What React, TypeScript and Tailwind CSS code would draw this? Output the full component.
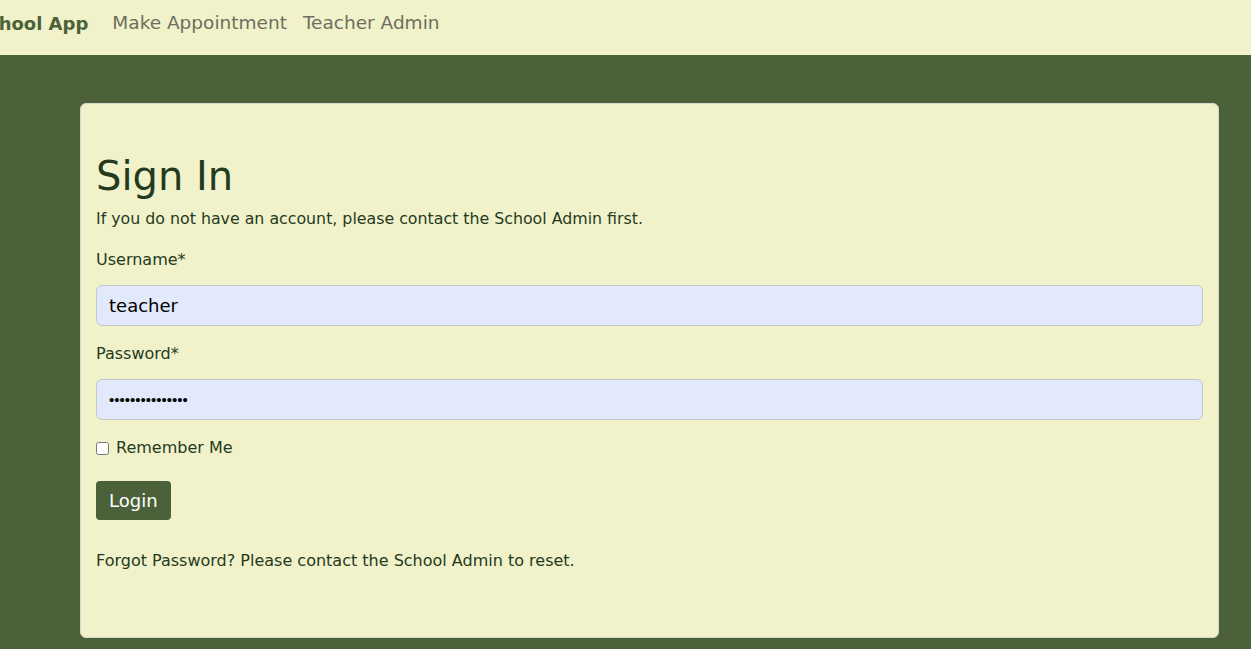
export default function App() {
    return (
        <div className="min-h-[649px] w-full bg-[#4b6139] font-['DejaVu_Sans',sans-serif] overflow-hidden">
            {/* top navigation */}
            <nav className="h-[55px] bg-[#f1f2ca] flex items-center pb-[9px]">
                <a className="-ml-[25px] text-[18px] font-bold text-[#4b6139] pr-[16px] whitespace-nowrap">School App</a>
                <a className="text-[18.5px] text-[#6c6f5e] px-2 whitespace-nowrap">Make Appointment</a>
                <a className="text-[18.5px] text-[#6c6f5e] px-2 whitespace-nowrap">Teacher Admin</a>
            </nav>

            <div className="pl-[80px] pr-[32px] pt-[48px] pb-[10px]">
                <div className="bg-[#f1f2ca] border border-[#d6d8cc] rounded-[6px] px-[15px] pt-[48px] pb-[64px] text-[#243a1e]">
                    <h1 className="text-[40px] leading-[48px] m-0">Sign In</h1>
                    <p className="text-[15.8px] leading-[24px] mt-[7px]">
                        If you do not have an account, please contact the School Admin first.
                    </p>

                    <div className="mt-[17px]">
                        <label className="block text-[16px] leading-[24px]">Username*</label>
                        <input
                            className="mt-[13px] w-full h-[41px] bg-[#e1e9fb] border border-[#c3c8ce] rounded-[6px] px-[12px] text-[18px] text-black outline-none"
                            defaultValue="teacher"
                        />
                    </div>

                    <div className="mt-[16px]">
                        <label className="block text-[16px] leading-[24px]">Password*</label>
                        <input
                            type="password"
                            className="mt-[13px] w-full h-[41px] bg-[#e1e9fb] border border-[#c3c8ce] rounded-[6px] px-[12px] font-['Liberation_Sans',sans-serif] text-[15px] text-black outline-none"
                            defaultValue="teacherpass1234"
                        />
                    </div>

                    <label className="flex items-center gap-[7px] mt-[16px] text-[16px] leading-[24px]">
                        <input type="checkbox" className="w-[13px] h-[13px] m-0" />
                        Remember Me
                    </label>

                    <button className="mt-[21px] bg-[#4b6139] text-white text-[18px] leading-[27px] px-[13px] py-[6px] rounded-[4px]">
                        Login
                    </button>

                    <p className="mt-[29px] text-[16px] leading-[24px]">
                        Forgot Password? Please contact the School Admin to reset.
                    </p>
                </div>
            </div>
        </div>
    );
}
